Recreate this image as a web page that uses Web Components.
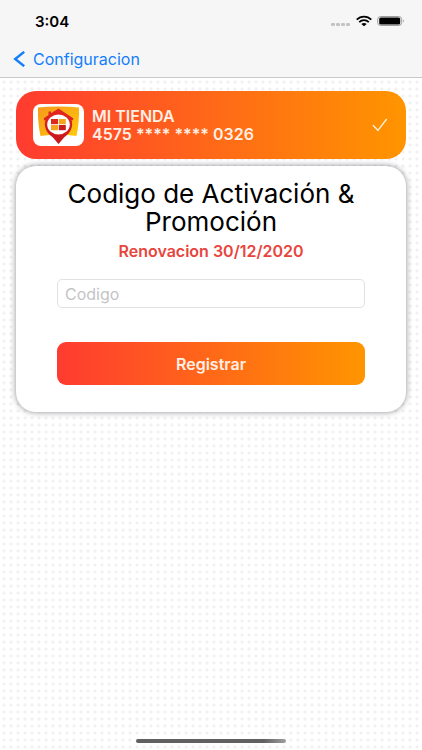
<!DOCTYPE html>
<html lang="es">
<head>
<meta charset="utf-8">
<meta name="viewport" content="width=device-width, initial-scale=1">
<title>Configuracion</title>
<style>
    html, body {
        margin: 0;
        min-height: 100%;
    }
    body {
        font-family: Inter, "Liberation Sans", sans-serif;
        color: #000;
        background: #fff radial-gradient(circle at 4px 4px, #f1f1f3 1px, rgba(255, 255, 255, 0) 2px) 0 1px / 7px 7px;
    }
</style>
</head>
<body>
<app-screen>
    <status-bar slot="header" time="3:04"></status-bar>
    <nav-bar slot="header" back="Configuracion"></nav-bar>
    <account-card name="MI TIENDA" number="4575 **** **** 0326"></account-card>
    <activation-form heading="Codigo de Activación &amp; Promoción" renewal="Renovacion 30/12/2020"></activation-form>
</app-screen>

<script>
class AppScreen extends HTMLElement {
    constructor() {
        super();
        this.attachShadow({ mode: 'open' }).innerHTML = `
            <style>
                :host {
                    display: flex;
                    flex-direction: column;
                    min-height: 100vh;
                }
                header {
                    background: #f6f6f6;
                    border-bottom: 1px solid #c8c8ca;
                }
                main {
                    flex: 1;
                    display: flex;
                    flex-direction: column;
                    gap: 7px;
                    padding: 13px 16px;
                }
                footer {
                    display: flex;
                    justify-content: center;
                    padding-bottom: 7px;
                }
                .indicator {
                    width: 150px;
                    height: 4px;
                    border-radius: 2px;
                    background: linear-gradient(to right, #606060 85%, #a0a0a0);
                }
            </style>
            <header><slot name="header"></slot></header>
            <main><slot></slot></main>
            <footer><div class="indicator"></div></footer>
        `;
    }
}

class StatusBar extends HTMLElement {
    connectedCallback() {
        this.attachShadow({ mode: 'open' }).innerHTML = `
            <style>
                :host {
                    display: flex;
                    align-items: center;
                    justify-content: space-between;
                    height: 42px;
                    padding: 0 17px 0 35px;
                    font-size: 15px;
                    font-weight: 600;
                }
                .icons {
                    display: flex;
                    align-items: center;
                    gap: 5px;
                }
            </style>
            <span class="time"></span>
            <div class="icons">
                <svg width="20" height="12" viewBox="0 0 20 12" fill="#c4c4c6">
                    <rect x="0" y="8" width="4" height="3" rx="1"/>
                    <rect x="5" y="8" width="4" height="3" rx="1"/>
                    <rect x="10" y="8" width="4" height="3" rx="1"/>
                    <rect x="15" y="8" width="4" height="3" rx="1"/>
                </svg>
                <svg width="16" height="12" viewBox="0 0 16 12" fill="none" stroke="#000" stroke-width="1.8">
                    <path d="M.7 4.6C4.8.5 11.2.5 15.3 4.6"/>
                    <path d="M3.2 7.1C6 4.6 10 4.6 12.8 7.1"/>
                    <path d="M5.3 8.9C6.8 7.6 9.2 7.6 10.7 8.9L8 11.2Z" fill="#000" stroke="none"/>
                </svg>
                <svg width="28" height="12" viewBox="0 0 28 12">
                    <rect x=".7" y="1.5" width="24" height="9" rx="3" fill="#f6f6f6" stroke="#9c9c9e"/>
                    <rect x="2.2" y="2.5" width="21" height="7" rx="1.6"/>
                    <path d="M26 4.5Q27.5 6 26 7.5Z" fill="#777"/>
                </svg>
            </div>
        `;
        this.shadowRoot.querySelector('.time').textContent = this.getAttribute('time');
    }
}

class NavBar extends HTMLElement {
    connectedCallback() {
        this.attachShadow({ mode: 'open' }).innerHTML = `
            <style>
                :host {
                    display: flex;
                    height: 35px;
                    padding: 0 13px;
                }
                a {
                    display: flex;
                    align-items: center;
                    gap: 7px;
                    height: 34px;
                    font-size: 16px;
                    color: #147efb;
                    text-decoration: none;
                }
            </style>
            <a href="#">
                <svg width="13" height="16" viewBox="0 0 13 16" fill="none" stroke="currentColor" stroke-width="2.4">
                    <path d="M11.2 .8L2.2 8L11.2 15.2"/>
                </svg>
                <span></span>
            </a>
        `;
        this.shadowRoot.querySelector('span').textContent = this.getAttribute('back');
    }
}

class StoreLogo extends HTMLElement {
    constructor() {
        super();
        this.attachShadow({ mode: 'open' }).innerHTML = `
            <style>
                :host { display: block; }
                svg { display: block; }
            </style>
            <svg width="51" height="42" viewBox="0 0 51 42">
                <defs>
                    <linearGradient id="panel" x1="0" y1="0" x2="1" y2="1">
                        <stop offset="0" stop-color="#f7981c"/>
                        <stop offset="1" stop-color="#ffc90a"/>
                    </linearGradient>
                    <linearGradient id="pin" x1="0" y1="0" x2="0" y2="1">
                        <stop offset="0" stop-color="#e5281f"/>
                        <stop offset="1" stop-color="#c5161c"/>
                    </linearGradient>
                </defs>
                <rect width="51" height="42" rx="8" fill="#fff"/>
                <path d="M5 3.5Q25.5 1.5 46 3.5Q46.5 18 43.5 32Q25.5 29.5 7.5 32Q4.5 18 5 3.5Z" fill="url(#panel)"/>
                <path d="M10.5 14.5L15.5 11V7.5H18V9.2L25.5 4.5L40.5 14.5L39.5 16.5L38.6 16C41 24 36 30 31.5 33L25.5 40L19.5 33C15 30 10 24 12.4 16L11.5 16.5Z" fill="url(#pin)"/>
                <ellipse cx="25.5" cy="20.5" rx="11.3" ry="10" fill="#fff"/>
                <rect x="18" y="15" width="7" height="5.2" fill="#dc281e"/>
                <rect x="25.8" y="15" width="7" height="5.2" fill="#f5a51b"/>
                <rect x="18" y="21" width="7" height="5.2" fill="#f5a51b"/>
                <rect x="25.8" y="21" width="7" height="5.2" fill="#c91c1e"/>
            </svg>
        `;
    }
}

class AccountCard extends HTMLElement {
    connectedCallback() {
        this.attachShadow({ mode: 'open' }).innerHTML = `
            <style>
                :host {
                    display: flex;
                    align-items: center;
                    gap: 8px;
                    height: 68px;
                    padding: 0 18px 0 17px;
                    border-radius: 20px;
                    background: linear-gradient(to right, #ff3b30, #ff9500);
                    color: #fff0e6;
                }
                .info {
                    flex: 1;
                    font-size: 16px;
                    line-height: 18px;
                    font-weight: 600;
                }
            </style>
            <store-logo></store-logo>
            <div class="info">
                <div class="name"></div>
                <div class="number"></div>
            </div>
            <svg width="16" height="14" viewBox="0 0 16 14" fill="none" stroke="#fff0d8" stroke-width="1.4" stroke-linecap="round" stroke-linejoin="round">
                <path d="M1.3 7.5L6 12.4L14.3 1.5"/>
            </svg>
        `;
        this.shadowRoot.querySelector('.name').textContent = this.getAttribute('name');
        this.shadowRoot.querySelector('.number').textContent = this.getAttribute('number');
    }
}

class ActivationForm extends HTMLElement {
    connectedCallback() {
        this.attachShadow({ mode: 'open' }).innerHTML = `
            <style>
                :host {
                    display: block;
                    padding: 14px 41px 27px;
                    border-radius: 20px;
                    background: #fff;
                    box-shadow: 0 0 6px rgba(0, 0, 20, 0.45);
                    text-align: center;
                }
                h1 {
                    margin: 0;
                    font-size: 26px;
                    line-height: 28px;
                    font-weight: 400;
                }
                p {
                    margin: 5px 0 18px;
                    font-size: 16px;
                    line-height: 20px;
                    font-weight: 600;
                    color: #e8453c;
                }
                form {
                    display: flex;
                    flex-direction: column;
                    gap: 34px;
                }
                input {
                    box-sizing: border-box;
                    width: 100%;
                    height: 29px;
                    margin: 0;
                    padding: 0 7px;
                    border: 1px solid #e2e2e4;
                    border-radius: 5px;
                    background: #fff;
                    font: 16px Inter, "Liberation Sans", sans-serif;
                }
                input::placeholder {
                    color: #c4c4c6;
                    opacity: 1;
                }
                button {
                    height: 43px;
                    border: 0;
                    border-radius: 9px;
                    background: linear-gradient(to right, #ff3b30, #ff9500);
                    font: 600 16px Inter, "Liberation Sans", sans-serif;
                    color: #fff0e6;
                }
            </style>
            <h1></h1>
            <p></p>
            <form>
                <input type="text" placeholder="Codigo" aria-label="Codigo">
                <button type="button">Registrar</button>
            </form>
        `;
        this.shadowRoot.querySelector('h1').textContent = this.getAttribute('heading');
        this.shadowRoot.querySelector('p').textContent = this.getAttribute('renewal');
    }
}

customElements.define('app-screen', AppScreen);
customElements.define('status-bar', StatusBar);
customElements.define('nav-bar', NavBar);
customElements.define('store-logo', StoreLogo);
customElements.define('account-card', AccountCard);
customElements.define('activation-form', ActivationForm);
</script>
</body>
</html>
